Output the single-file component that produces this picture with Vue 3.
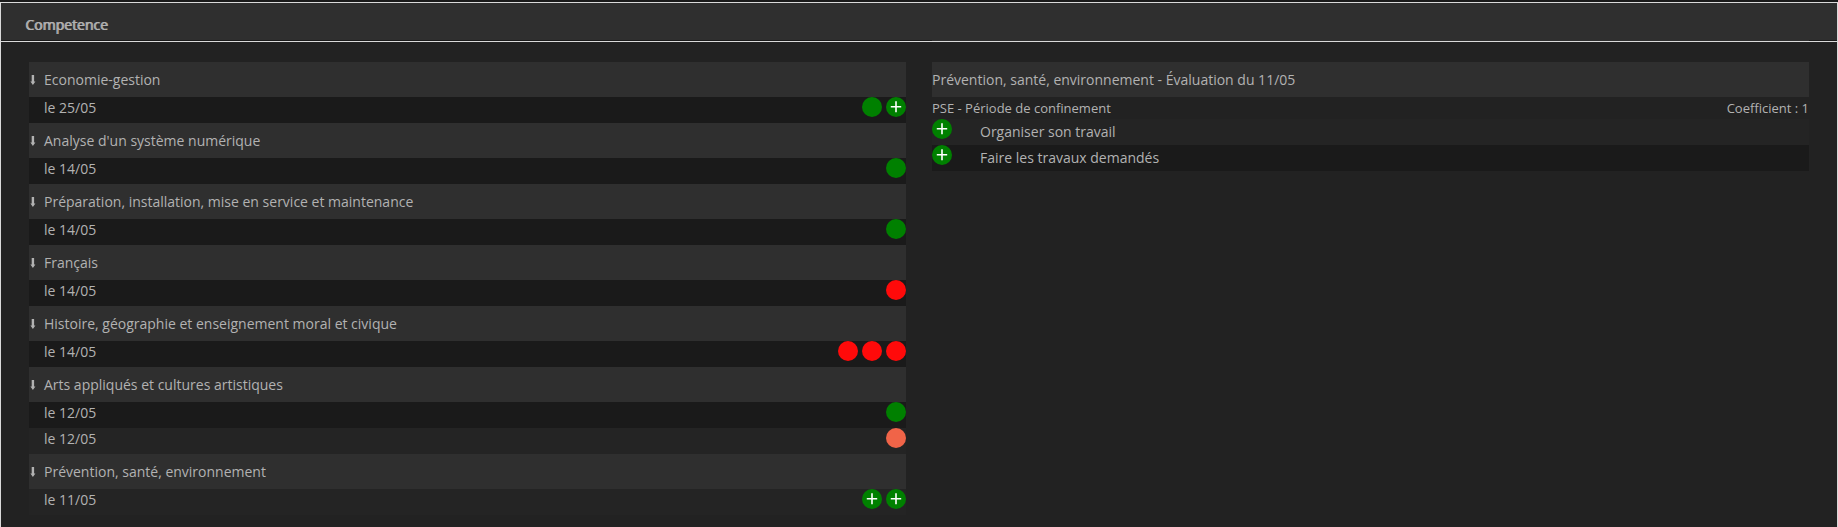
<script setup>
const subjects = [
  { name: 'Economie-gestion', evaluations: [{ date: '25/05', shade: 'dark', marks: ['green', 'plus'] }] },
  { name: "Analyse d'un système numérique", evaluations: [{ date: '14/05', shade: 'dark', marks: ['green'] }] },
  { name: 'Préparation, installation, mise en service et maintenance', evaluations: [{ date: '14/05', shade: 'dark', marks: ['green'] }] },
  { name: 'Français', evaluations: [{ date: '14/05', shade: 'dark', marks: ['red'] }] },
  { name: 'Histoire, géographie et enseignement moral et civique', evaluations: [{ date: '14/05', shade: 'dark', marks: ['red', 'red', 'red'] }] },
  {
    name: 'Arts appliqués et cultures artistiques',
    evaluations: [
      { date: '12/05', shade: 'dark', marks: ['green'] },
      { date: '12/05', shade: 'light', marks: ['coral'] },
    ],
  },
  { name: 'Prévention, santé, environnement', evaluations: [{ date: '11/05', shade: 'light', marks: ['plus', 'plus'] }] },
]

const skills = [
  { label: 'Organiser son travail', shade: 'light' },
  { label: 'Faire les travaux demandés', shade: 'dark' },
]
</script>

<template>
  <main class="panel">
    <header class="panel-head">
      <h1>Competence</h1>
    </header>
    <div class="columns">
      <section class="column">
        <template v-for="subject in subjects" :key="subject.name">
          <h2 class="bar">
            <svg class="arrow" viewBox="0 0 6 10" aria-hidden="true">
              <path d="M1.7 0h2.4v6.6h1.3L2.9 10L.4 6.6h1.3z" />
            </svg>
            <span>{{ subject.name }}</span>
          </h2>
          <div v-for="(item, i) in subject.evaluations" :key="i" class="row" :class="item.shade">
            <span class="date">le {{ item.date }}</span>
            <span class="marks">
              <svg v-for="(mark, j) in item.marks" :key="j" class="mark" :class="mark" viewBox="0 0 20 20" aria-hidden="true">
                <circle cx="10" cy="10" r="10" />
                <path v-if="mark === 'plus'" d="M4.8 9h4.4V4.3h1.6V9h4.4v1.6h-4.4v4.7H9.2v-4.7H4.8z" />
              </svg>
            </span>
          </div>
        </template>
      </section>
      <section class="column">
        <h2 class="bar">Prévention, santé, environnement - Évaluation du 11/05</h2>
        <div class="caption">
          <span>PSE - Période de confinement</span>
          <span>Coefficient : 1</span>
        </div>
        <div v-for="skill in skills" :key="skill.label" class="row skill" :class="skill.shade">
          <span class="level">
            <svg class="mark plus" viewBox="0 0 20 20" aria-hidden="true">
              <circle cx="10" cy="10" r="10" />
              <path d="M4.8 9h4.4V4.3h1.6V9h4.4v1.6h-4.4v4.7H9.2v-4.7H4.8z" />
            </svg>
          </span>
          <span>{{ skill.label }}</span>
        </div>
      </section>
    </div>
  </main>
</template>

<style>
html {
  background: #1a1a1a;
}
body {
  margin: 0;
}
#app {
  min-height: 100vh;
  display: flex;
  flex-direction: column;
}
</style>

<style scoped>
.panel {
  flex: 1;
  box-sizing: border-box;
  margin-top: 2px;
  border: 1px solid #dadada;
  border-bottom: 0;
  background: #222222;
  color: #b2b2b2;
  font: 14px/20px "Open Sans", "Noto Sans", sans-serif;
}
h1,
h2 {
  margin: 0;
  font-size: inherit;
}
.panel-head {
  padding: 12px 24px 6px;
  border-bottom: 1px solid #dadada;
  background:
    linear-gradient(to right, #1a1a1a calc(50% + 13px), transparent 0 calc(100% - 28px), #1a1a1a 0)
      bottom / 100% 1px no-repeat padding-box,
    #2f2f2f;
}
.panel-head h1 {
  font-weight: 400;
  text-shadow: 1px 0 currentColor;
}
.columns {
  display: grid;
  grid-template-columns: 1fr 1fr;
  gap: 26px;
  padding: 20px 28px 12px;
}
.bar {
  display: flex;
  align-items: center;
  height: 35px;
  background: #2f2f2f;
  font-weight: 400;
}
.arrow {
  width: 6px;
  height: 10px;
  margin: 0 8px 0 1px;
  fill: #b2b2b2;
}
.row {
  display: flex;
  height: 26px;
  line-height: 22px;
}
.skill {
  line-height: 26px;
}
.dark {
  background: #1a1a1a;
}
.light {
  background: #242424;
}
.date {
  flex: 1;
  padding-left: 15px;
}
.marks {
  display: flex;
  gap: 4px;
}
.level {
  width: 48px;
}
.mark {
  display: block;
  width: 20px;
  height: 20px;
}
.mark path {
  fill: #ffffff;
}
.green,
.plus {
  fill: #008000;
}
.red {
  fill: #ff0a0a;
}
.coral {
  fill: #f06448;
}
.caption {
  display: flex;
  justify-content: space-between;
  height: 22px;
  font-size: 13px;
  line-height: 22px;
}
</style>
